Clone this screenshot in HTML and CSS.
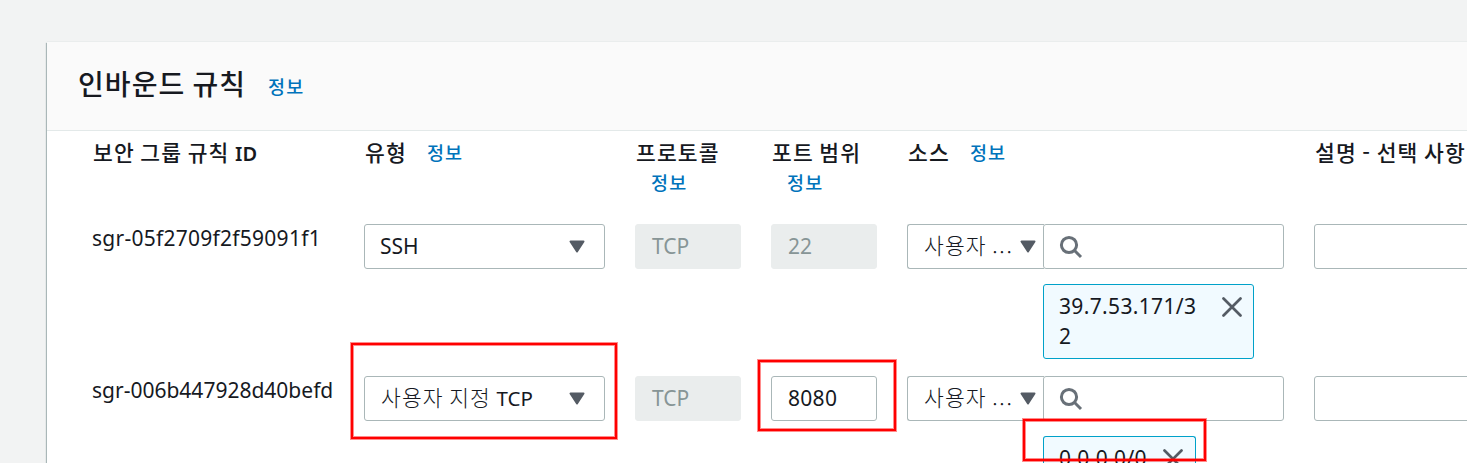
FILE: index.html
```html
<!DOCTYPE html>
<html lang="ko">
<head>
<meta charset="utf-8">
<title>인바운드 규칙</title>
<link rel="stylesheet" href="styles.css">
</head>
<body>
<svg class="defs" width="0" height="0">
  <symbol id="caret" viewBox="0 0 16 13"><path d="M1.5 1.5h13L8 11.5z" fill="#545b64" stroke="#545b64" stroke-width="2" stroke-linejoin="round"/></symbol>
  <symbol id="search" viewBox="0 0 24 24"><circle cx="10" cy="10" r="7.6" fill="none" stroke="#687078" stroke-width="3"/><path d="M15.3 15.3l6.7 6.7" stroke="#687078" stroke-width="3"/></symbol>
  <symbol id="close" viewBox="0 0 20 20"><path d="M1.5 1.5l17 17M18.500 1.500l-17 17" stroke="#545b64" stroke-width="2.700" stroke-linecap="round"/></symbol>
</svg>
<main class="panel">
  <header class="panel-header">
    <h1 class="title">인바운드 규칙</h1>
    <a class="info">정보</a>
  </header>
  <section class="rules">
    <div class="grid labels">
      <div class="label">보안 그룹 규칙 <span class="latin">ID</span></div>
      <div class="label">유형<a class="info">정보</a></div>
      <div class="label">프로토콜<a class="info wrapped">정보</a></div>
      <div class="label">포트 범위<a class="info wrapped">정보</a></div>
      <div class="label">소스<a class="info">정보</a></div>
      <div class="label">설명 - 선택 사항</div>
    </div>
    <div class="grid rule">
      <div class="rule-id first-id">sgr-05f2709f2f59091f1</div>
      <div class="field select"><span>SSH</span><svg class="caret"><use href="#caret"/></svg></div>
      <div class="field disabled">TCP</div>
      <div class="field disabled">22</div>
      <div class="source">
        <div class="field select source-type"><span class="ko">사용자 <span class="dots">...</span></span><svg class="caret"><use href="#caret"/></svg></div>
        <div class="source-value">
          <div class="field search"><svg class="search-icon"><use href="#search"/></svg></div>
          <div class="token wide"><span>39.7.53.171/3<br>2</span><svg class="close"><use href="#close"/></svg></div>
        </div>
      </div>
      <div class="field"></div>
    </div>
    <div class="grid rule">
      <div class="rule-id second-id">sgr-006b447928d40befd</div>
      <div class="field select"><span class="ko">사용자 지정 <span class="latin">TCP</span></span><svg class="caret"><use href="#caret"/></svg></div>
      <div class="field disabled">TCP</div>
      <div class="field port">8080</div>
      <div class="source">
        <div class="field select source-type"><span class="ko">사용자 <span class="dots">...</span></span><svg class="caret"><use href="#caret"/></svg></div>
        <div class="source-value">
          <div class="field search"><svg class="search-icon"><use href="#search"/></svg></div>
          <div class="token narrow"><span>0.0.0.0/0</span><svg class="close"><use href="#close"/></svg></div>
        </div>
      </div>
      <div class="field"></div>
    </div>
  </section>
</main>
<div class="highlight type-highlight"></div>
<div class="highlight port-highlight"></div>
<div class="highlight source-highlight"></div>
</body>
</html>
```
FILE: styles.css
```css
* { box-sizing: border-box; }
html { overflow: hidden; }
body {
  margin: 0;
  height: 463px;
  overflow: hidden;
  position: relative;
  padding: 42px 0 0 47px;
  background: #f2f3f3;
  color: #16191f;
  font: 21px/30px "Noto Sans", "Noto Sans CJK KR", sans-serif;
}
.defs { position: absolute; }
.panel {
  height: 421px;
  overflow: hidden;
  background: #fff;
  box-shadow: -1px 1px 1px #aab7b8, 0 -1px 0 #eaeded;
}
.panel-header {
  display: flex;
  height: 89px;
  padding: 21px 0 0 31px;
  background: #fafafa;
  border-bottom: 1px solid #e3e9e9;
}
.title {
  margin: 0;
  font: 500 28px/40px "Noto Sans CJK KR", sans-serif;
  letter-spacing: 1.1px;
  word-spacing: -2px;
  white-space: nowrap;
}
.info {
  font: 500 18.500px/30px "Noto Sans CJK KR", sans-serif;
  letter-spacing: 1.2px;
  word-spacing: 0;
  color: #0073bb;
}
.panel-header .info { margin: 8px 0 0 22px; }
.rules { padding-left: 45px; }
.grid {
  display: grid;
  grid-template-columns: 242px 241px 106px 106px 377px 377px;
  column-gap: 30px;
}
.labels { height: 93px; padding-top: 6px; }
.label {
  padding-left: 1px;
  font: 500 21.500px/30px "Noto Sans CJK KR", sans-serif;
  letter-spacing: 1.150px;
  word-spacing: -1.700px;
  white-space: nowrap;
}
.label .info { position: relative; top: -1px; margin-left: 20px; }
.label .wrapped { top: 0; display: block; margin-left: 15px; }
.label .latin { font: 600 20px/20px "Noto Sans"; letter-spacing: 0; }
.rule { height: 152px; align-items: start; }
.rule-id { margin-top: -1px; white-space: nowrap; }
.first-id { letter-spacing: 0.260px; }
.field {
  display: flex;
  align-items: center;
  height: 45px;
  padding: 0 16px 1px;
  border: 1px solid #aab7b8;
  border-radius: 3px;
  background: #fff;
  white-space: nowrap;
}
.port { letter-spacing: 0.300px; }
.disabled { background: #eaeded; border-color: #eaeded; color: #879596; }
.select { justify-content: space-between; padding-left: 15px; padding-right: 19px; }
.ko {
  margin: -3px 0 0 1px;
  font: 300 21.500px/30px "Noto Sans CJK KR", sans-serif;
  letter-spacing: 1.1px;
  word-spacing: -1.600px;
}
.dots { letter-spacing: 1.8px; }
.ko .latin { font: 400 20.500px/20px "Noto Sans"; letter-spacing: 0; }
.caret { width: 16px; height: 13px; flex: none; position: relative; top: 0.500px; }
.source { display: flex; }
.source-type { width: 137px; padding-right: 8px; border-right: 0; border-radius: 3px 0 0 3px; }
.source-value { width: 241px; margin-left: -1px; }
.search { padding-left: 15px; }
.search-icon { width: 24px; height: 24px; position: relative; top: 1px; }
.token {
  display: flex;
  justify-content: space-between;
  align-items: flex-start;
  height: 75px;
  margin-top: 15px;
  padding: 7px 11px 0 15px;
  border: 1px solid #00a1c9;
  border-radius: 3px;
  background: #f1faff;
  letter-spacing: 0.350px;
}
.wide { width: 211px; }
.narrow { width: 153px; height: 27px; padding-right: 12px; border-bottom: 0; border-radius: 3px 3px 0 0; }
.token span { margin-top: -1px; }
.close { width: 20px; height: 20px; margin-top: 5px; flex: none; }
/* Solid 2px frame with a lighter edge on both sides. */
.highlight {
  position: absolute;
  border: 2px solid #f00;
  box-shadow: 0 0 0 1px rgba(255, 0, 0, .45), inset 0 0 0 1px rgba(255, 0, 0, .45);
}
.type-highlight { left: 351px; top: 343px; width: 266px; height: 96px; }
.port-highlight { left: 758px; top: 360px; width: 138px; height: 71px; }
.source-highlight { left: 1023px; top: 419px; width: 183px; height: 42px; }
```
